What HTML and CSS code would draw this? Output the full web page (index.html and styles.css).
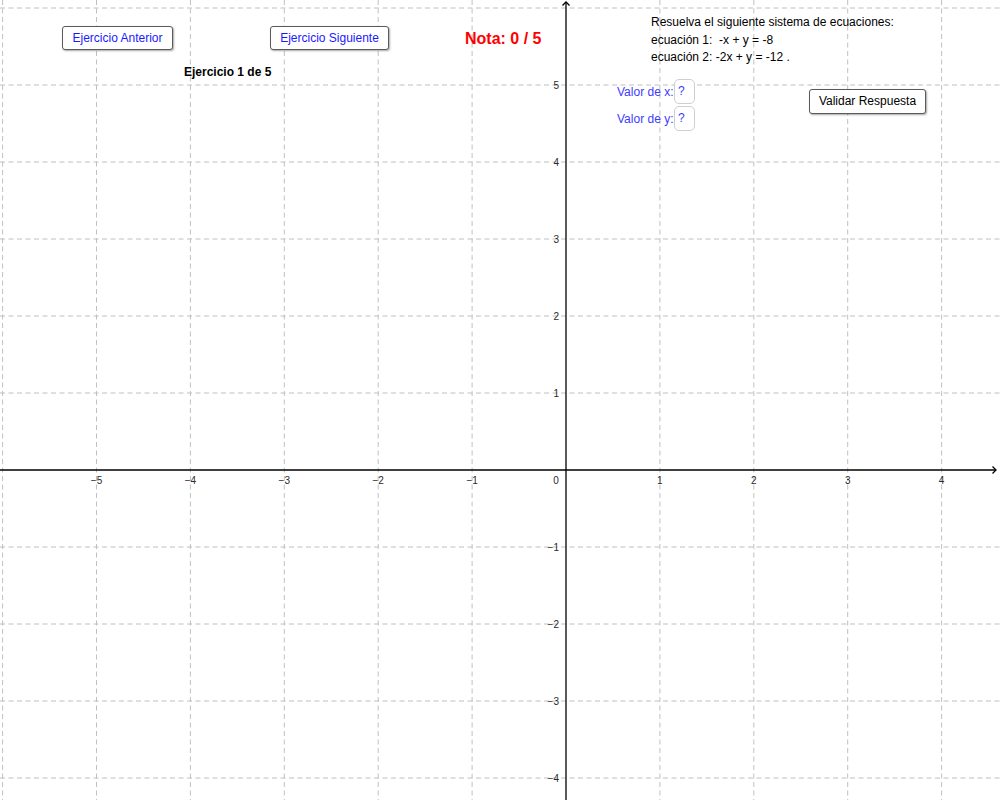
FILE: index.html
```html
<!DOCTYPE html>
<html lang="es">
<head>
<meta charset="utf-8">
<title>Sistema de ecuaciones</title>
<link rel="stylesheet" href="styles.css">
</head>
<body>
<div class="canvas">
  <svg class="grid" width="1000" height="800" viewBox="0 0 1000 800">
    <g class="gridlines">
      <line x1="2.6" y1="0" x2="2.6" y2="800"/>
      <line x1="96.5" y1="0" x2="96.5" y2="800"/>
      <line x1="190.4" y1="0" x2="190.4" y2="800"/>
      <line x1="284.3" y1="0" x2="284.3" y2="800"/>
      <line x1="378.2" y1="0" x2="378.2" y2="800"/>
      <line x1="472.1" y1="0" x2="472.1" y2="800"/>
      <line x1="659.9" y1="0" x2="659.9" y2="800"/>
      <line x1="753.8" y1="0" x2="753.8" y2="800"/>
      <line x1="847.7" y1="0" x2="847.7" y2="800"/>
      <line x1="941.6" y1="0" x2="941.6" y2="800"/>
      <line x1="0" y1="8" x2="1000" y2="8"/>
      <line x1="0" y1="85" x2="1000" y2="85"/>
      <line x1="0" y1="162" x2="1000" y2="162"/>
      <line x1="0" y1="239" x2="1000" y2="239"/>
      <line x1="0" y1="316" x2="1000" y2="316"/>
      <line x1="0" y1="393" x2="1000" y2="393"/>
      <line x1="0" y1="547" x2="1000" y2="547"/>
      <line x1="0" y1="624" x2="1000" y2="624"/>
      <line x1="0" y1="701" x2="1000" y2="701"/>
      <line x1="0" y1="778" x2="1000" y2="778"/>
    </g>
    <g class="axes">
      <line x1="0" y1="470" x2="996" y2="470"/>
      <polyline points="992.5,466.5 996,470 992.5,473.5"/>
      <line x1="566" y1="2" x2="566" y2="800"/>
      <polyline points="562.5,5.5 566,2 569.5,5.5"/>
    </g>
    <g class="xlabels" text-anchor="middle">
      <text x="96.5" y="484">−5</text>
      <text x="190.4" y="484">−4</text>
      <text x="284.3" y="484">−3</text>
      <text x="378.2" y="484">−2</text>
      <text x="472.1" y="484">−1</text>
      <text x="556" y="484">0</text>
      <text x="659.9" y="484">1</text>
      <text x="753.8" y="484">2</text>
      <text x="847.7" y="484">3</text>
      <text x="941.6" y="484">4</text>
    </g>
    <g class="ylabels" text-anchor="end">
      <text x="559" y="88.5">5</text>
      <text x="559" y="165.5">4</text>
      <text x="559" y="242.5">3</text>
      <text x="559" y="319.5">2</text>
      <text x="559" y="396.5">1</text>
      <text x="559" y="550.5">−1</text>
      <text x="559" y="627.5">−2</text>
      <text x="559" y="704.5">−3</text>
      <text x="559" y="781.5">−4</text>
    </g>
  </svg>

  <button class="btn btn-blue btn-prev">Ejercicio Anterior</button>
  <button class="btn btn-blue btn-next">Ejercicio Siguiente</button>
  <div class="counter">Ejercicio 1 de 5</div>
  <div class="nota">Nota: 0 / 5</div>

  <div class="enunciado">
    <span>Resuelva el siguiente sistema de ecuaciones:</span>
    <span>ecuación 1:&nbsp; -x + y = -8</span>
    <span>ecuación 2: -2x + y = -12 .</span>
  </div>

  <div class="inputs">
    <label class="field"><span class="field-label">Valor de x:</span><span class="field-box">?</span></label>
    <label class="field"><span class="field-label">Valor de y:</span><span class="field-box">?</span></label>
  </div>

  <button class="btn btn-validar">Validar Respuesta</button>
</div>
</body>
</html>
```

FILE: styles.css
```css
html, body {
  margin: 0;
  padding: 0;
  background: #ffffff;
}

body {
  font-family: "Liberation Sans", Arial, sans-serif;
  overflow: hidden;
}

.canvas {
  position: relative;
  width: 1000px;
  height: 800px;
  overflow: hidden;
  background: #ffffff;
}

.grid {
  position: absolute;
  left: 0;
  top: 0;
  display: block;
}

.gridlines line {
  stroke: #c0c0c0;
  stroke-width: 1;
  stroke-dasharray: 5 3.5;
}

.axes line,
.axes polyline {
  stroke: #000000;
  stroke-width: 1.3;
  fill: none;
}

.xlabels text,
.ylabels text {
  font-family: "Liberation Sans", Arial, sans-serif;
  font-size: 10px;
  fill: #2a2a2a;
}

.btn {
  position: absolute;
  box-sizing: border-box;
  height: 24px;
  padding: 0;
  margin: 0;
  background: #ffffff;
  border: 1px solid #5a5a5a;
  border-radius: 3px;
  box-shadow: 1px 1px 2px rgba(0, 0, 0, 0.35);
  font-family: "Liberation Sans", Arial, sans-serif;
  font-size: 12px;
  line-height: 22px;
  text-align: center;
  color: #000000;
  white-space: nowrap;
}

.btn-blue {
  color: #1a1aff;
}

.btn-prev {
  left: 62px;
  top: 26px;
  width: 111px;
}

.btn-next {
  left: 270px;
  top: 26px;
  width: 119px;
}

.btn-validar {
  left: 809px;
  top: 89px;
  width: 117px;
  height: 25px;
  line-height: 23px;
}

.counter {
  position: absolute;
  left: 184px;
  top: 64px;
  font-size: 12px;
  font-weight: bold;
  line-height: 16px;
  color: #000000;
  white-space: nowrap;
}

.nota {
  position: absolute;
  left: 465px;
  top: 29px;
  font-size: 16px;
  font-weight: bold;
  line-height: 20px;
  color: #ff0000;
  white-space: nowrap;
}

.enunciado {
  position: absolute;
  left: 651px;
  top: 14px;
  display: flex;
  flex-direction: column;
  gap: 1.5px;
  font-size: 12px;
  line-height: 16px;
  color: #000000;
  white-space: nowrap;
}

.inputs {
  position: absolute;
  left: 617px;
  top: 79px;
  display: flex;
  flex-direction: column;
  gap: 2px;
}

.field {
  display: flex;
  align-items: center;
  height: 25px;
}

.field-label {
  flex: 0 0 auto;
  width: 57px;
  font-size: 12px;
  color: #3c3cff;
  white-space: nowrap;
}

.field-box {
  flex: 0 0 auto;
  box-sizing: border-box;
  width: 21px;
  height: 25px;
  border: 1px solid #cfcfcf;
  border-radius: 5px;
  font-size: 12px;
  line-height: 23px;
  padding-left: 3px;
  color: #3c3cff;
  background: #ffffff;
}
```
